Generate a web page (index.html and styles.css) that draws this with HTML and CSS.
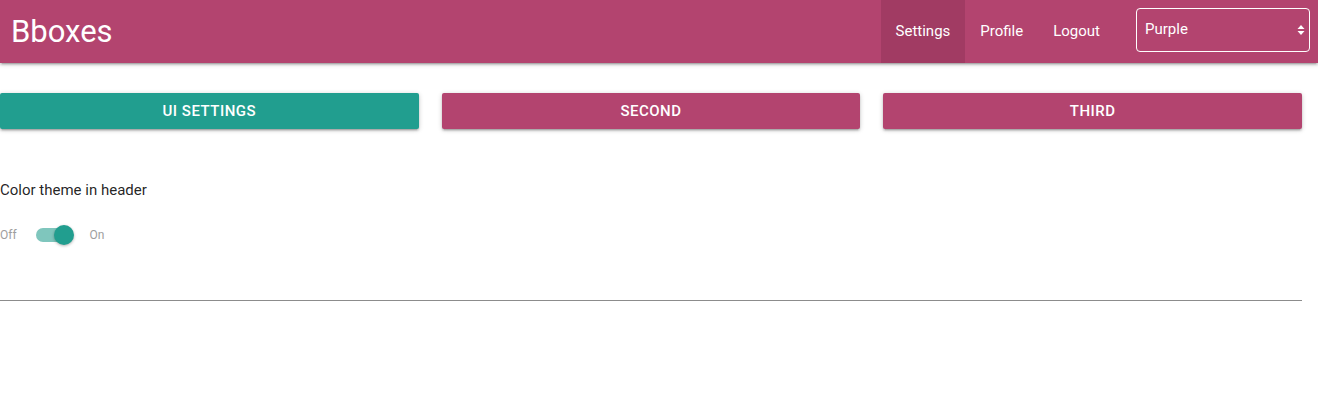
FILE: index.html
```html
<!DOCTYPE html>
<html>
<head>
<meta charset="utf-8">
<link rel="stylesheet" href="styles.css">
</head>
<body>
<header class="nav">
  <div class="brand">Bboxes</div>
  <nav class="links">
    <a class="link active">Settings</a>
    <a class="link">Profile</a>
    <a class="link">Logout</a>
    <div class="select">
      <span>Purple</span>
      <svg class="arrows" width="8" height="12" viewBox="0 0 8 12"><path d="M4 1 L7.5 5 H0.5 Z M4 11 L7.5 7 H0.5 Z" fill="#fff"/></svg>
    </div>
  </nav>
</header>
<main class="content">
  <div class="tabs">
    <button class="btn teal">UI Settings</button>
    <button class="btn">Second</button>
    <button class="btn">Third</button>
  </div>
  <p class="label">Color theme in header</p>
  <div class="switch">
    <span class="state">Off</span>
    <span class="lever"><span class="thumb"></span></span>
    <span class="state">On</span>
  </div>
  <hr class="divider">
</main>
</body>
</html>
```

FILE: styles.css
```css
* { box-sizing: border-box; }
body {
  margin: 0;
  font-family: Roboto, "Liberation Sans", sans-serif;
  color: rgba(0,0,0,0.87);
  background: #fff;
}
.nav {
  height: 63px;
  background: #b3446f;
  display: flex;
  align-items: center;
  justify-content: space-between;
  box-shadow: 0 2px 2px 0 rgba(0,0,0,0.14), 0 3px 1px -2px rgba(0,0,0,0.12), 0 1px 5px 0 rgba(0,0,0,0.2);
  color: #fff;
}
.brand {
  font-size: 31px;
  padding-left: 11px;
  line-height: 63px;
}
.links {
  display: flex;
  align-items: center;
  height: 100%;
  padding-right: 8px;
}
.link {
  font-size: 15px;
  padding: 0 15px;
  line-height: 62px;
  height: 63px;
  color: #fff;
}
.link.active { background: #a13b63; }
.select {
  margin: 0 0 3px 21px;
  width: 174px;
  height: 44px;
  border: 1.5px solid #fff;
  border-radius: 4px;
  display: flex;
  align-items: center;
  justify-content: space-between;
  padding: 0 4px 2px 8px;
  font-size: 15px;
}
.arrows { margin-top: 2px; }
.content {
  width: 1302px;
  padding-top: 30px;
}
.tabs {
  display: grid;
  grid-template-columns: repeat(3, 1fr);
  gap: 23px;
}
.btn {
  height: 36px;
  border: none;
  border-radius: 2px;
  background: #b3446f;
  color: #fff;
  font-family: Roboto, "Liberation Sans", sans-serif;
  font-size: 15px;
  font-weight: 500;
  letter-spacing: 0.5px;
  text-transform: uppercase;
  box-shadow: 0 2px 2px 0 rgba(0,0,0,0.14), 0 3px 1px -2px rgba(0,0,0,0.12), 0 1px 5px 0 rgba(0,0,0,0.2);
}
.btn.teal { background: #219e8f; }
.label {
  margin: 51px 0 0;
  font-size: 15px;
  line-height: 20px;
}
.switch {
  margin-top: 25px;
  display: flex;
  align-items: center;
  height: 20px;
}
.state {
  font-size: 12px;
  color: #9e9e9e;
}
.lever {
  position: relative;
  width: 36px;
  height: 14px;
  margin: 0 18px 0 19px;
  border-radius: 15px;
  background: #7fc6bd;
}
.thumb {
  position: absolute;
  top: -3px;
  left: 18px;
  width: 20px;
  height: 20px;
  border-radius: 50%;
  background: #219e8f;
  box-shadow: 0 1px 3px rgba(0,0,0,0.3);
}
.divider {
  margin: 55px 0 0;
  border: none;
  border-top: 1px solid #8c8c8c;
}
```
